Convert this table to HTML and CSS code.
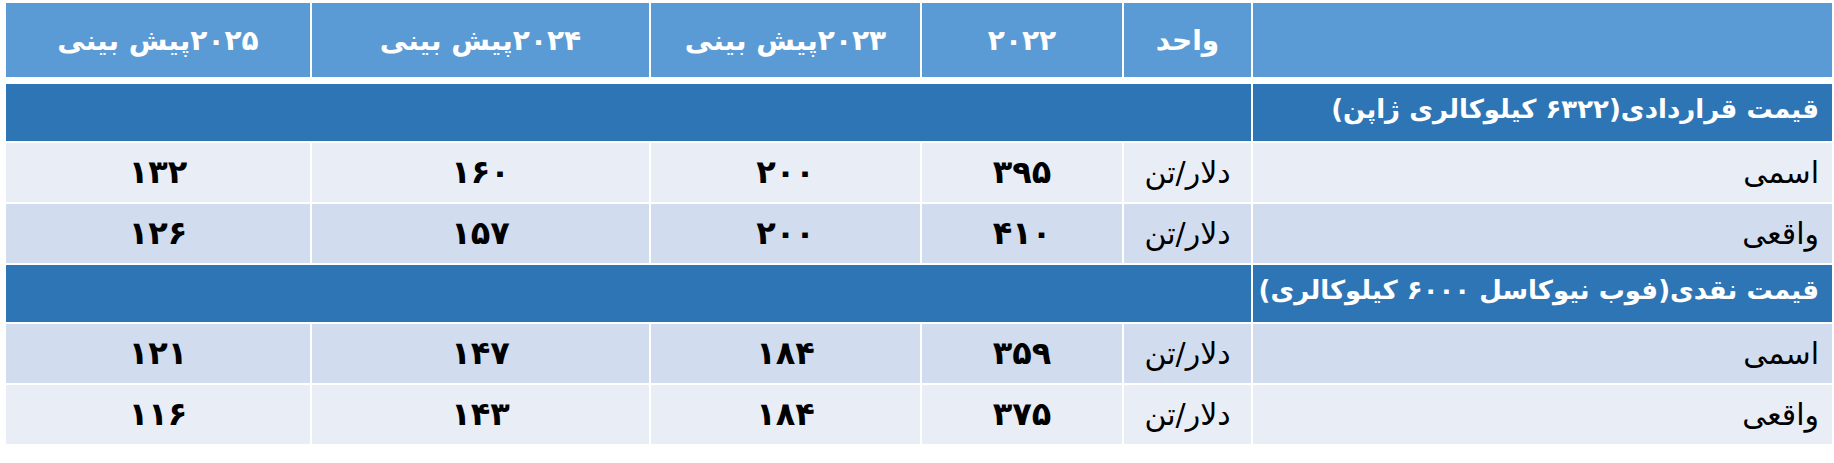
FILE: index.html
```html
<!DOCTYPE html>
<html lang="fa" dir="rtl">
<head>
<meta charset="utf-8">
<title>قیمت زغال سنگ</title>
<link rel="stylesheet" href="styles.css">
</head>
<body>
<table class="grid">
  <colgroup>
    <col class="c-label">
    <col class="c-unit">
    <col class="c-y22">
    <col class="c-y23">
    <col class="c-y24">
    <col class="c-y25">
  </colgroup>
  <thead>
    <tr class="head">
      <th></th>
      <th>واحد</th>
      <th>۲۰۲۲</th>
      <th>۲۰۲۳پیش بینی</th>
      <th>۲۰۲۴پیش بینی</th>
      <th>۲۰۲۵پیش بینی</th>
    </tr>
  </thead>
  <tbody>
    <tr class="section">
      <td class="sec-title">قیمت قراردادی(۶۳۲۲ کیلوکالری ژاپن)</td>
      <td colspan="5"></td>
    </tr>
    <tr class="band-a">
      <td class="label">اسمی</td>
      <td class="unit">دلار/تن</td>
      <td class="num">۳۹۵</td>
      <td class="num">۲۰۰</td>
      <td class="num">۱۶۰</td>
      <td class="num">۱۳۲</td>
    </tr>
    <tr class="band-b">
      <td class="label">واقعی</td>
      <td class="unit">دلار/تن</td>
      <td class="num">۴۱۰</td>
      <td class="num">۲۰۰</td>
      <td class="num">۱۵۷</td>
      <td class="num">۱۲۶</td>
    </tr>
    <tr class="section">
      <td class="sec-title">قیمت نقدی(فوب نیوکاسل ۶۰۰۰ کیلوکالری)</td>
      <td colspan="5"></td>
    </tr>
    <tr class="band-b">
      <td class="label">اسمی</td>
      <td class="unit">دلار/تن</td>
      <td class="num">۳۵۹</td>
      <td class="num">۱۸۴</td>
      <td class="num">۱۴۷</td>
      <td class="num">۱۲۱</td>
    </tr>
    <tr class="band-a">
      <td class="label">واقعی</td>
      <td class="unit">دلار/تن</td>
      <td class="num">۳۷۵</td>
      <td class="num">۱۸۴</td>
      <td class="num">۱۴۳</td>
      <td class="num">۱۱۶</td>
    </tr>
  </tbody>
</table>
</body>
</html>
```

FILE: styles.css
```css
html, body {
  margin: 0;
  padding: 0;
  background: #ffffff;
}

body {
  font-family: "DejaVu Sans", "Noto Sans", sans-serif;
  padding-top: 1px;
}

.grid {
  width: 1830px;
  table-layout: fixed;
  border-collapse: separate;
  border-spacing: 2px;
  background: #ffffff;
}

.c-label { width: 579px; }
.c-unit { width: 127px; }
.c-y22 { width: 200px; }
.c-y23 { width: 269px; }
.c-y24 { width: 337px; }
.c-y25 { width: 304px; }

.grid th,
.grid td {
  padding: 0;
  box-sizing: border-box;
  line-height: 1.2;
}

.head th {
  height: 79px;
  background: #5b9bd5;
  background-clip: padding-box;
  border-bottom: 5px solid #ffffff;
  color: #ffffff;
  font-weight: bold;
  font-size: 28px;
  text-align: center;
  vertical-align: middle;
  padding-top: 2px;
}

.section td {
  height: 57px;
  background: #2e75b6;
  color: #ffffff;
  font-weight: bold;
  font-size: 26px;
}

.sec-title {
  text-align: right;
  padding-right: 13px !important;
  padding-bottom: 6px !important;
  white-space: nowrap;
}

.band-a td,
.band-b td {
  height: 59px;
  color: #000000;
  font-size: 30px;
}

.band-a td { background: #e9edf6; }
.band-b td { background: #d1ddee; }

.label {
  text-align: right;
  padding-right: 13px !important;
}

.unit {
  text-align: center;
}

.num {
  text-align: center;
  font-weight: bold;
  font-size: 32px !important;
}
```
